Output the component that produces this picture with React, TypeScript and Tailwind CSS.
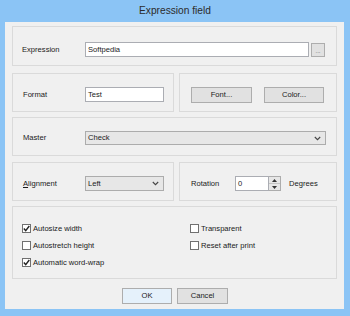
import type { ReactNode } from "react";

const Panel = ({ className = "", children }: { className?: string; children: ReactNode }) => (
  <div className={`border border-[#dadada] ${className}`}>{children}</div>
);

const Chevron = () => (
  <svg width="7" height="5" viewBox="0 0 7 5" className="shrink-0">
    <path d="M0.8 1 L3.5 3.7 L6.2 1" fill="none" stroke="#444" strokeWidth="1.1" />
  </svg>
);

const Check = ({ checked, label }: { checked?: boolean; label: string }) => (
  <div className="flex h-[17px] items-center">
    <span className="flex h-[9px] w-[9px] items-center justify-center border border-[#707070] bg-white">
      {checked && (
        <svg width="7" height="7" viewBox="0 0 7 7">
          <path d="M0.8 3.6 L2.7 5.6 L6.3 1" fill="none" stroke="#222" strokeWidth="1.4" />
        </svg>
      )}
    </span>
    <span className="ml-[2px]">{label}</span>
  </div>
);

const Btn = ({ children, className = "" }: { children: ReactNode; className?: string }) => (
  <div
    className={`flex h-[16px] items-center justify-center border border-[#adadad] bg-[#e1e1e1] ${className}`}
  >
    {children}
  </div>
);

export default function App() {
  return (
    <div className="flex h-[316px] w-[350px] flex-col bg-[#8bc4f5] font-['Liberation_Sans',Arial,sans-serif] text-[7.6px] text-[#1a1a1a]">
      <div className="flex h-[22px] shrink-0 items-center justify-center text-[10.2px] text-[#2b2b2b]">
        Expression field
      </div>

      <div className="ml-[5px] mr-[6px] flex h-[287px] flex-col bg-[#f0f0f0] px-[7px] pt-[4px]">
        <Panel className="h-[40px] pl-[9px] pt-[15px]">
          <div className="flex items-center">
            <span className="w-[63px]">Expression</span>
            <div className="flex h-[15px] w-[224px] items-center border border-[#abadb3] bg-white px-[2px]">
              Softpedia
            </div>
            <div className="ml-[2px] flex h-[14px] w-[14px] items-end justify-center border border-[#adadad] bg-[#e1e1e1] pb-[2px] text-[6px] leading-none text-[#555]">
              ...
            </div>
          </div>
        </Panel>

        <div className="mt-[7px] flex h-[39px] gap-[5px]">
          <Panel className="w-[162px] pl-[10px] pt-[13px]">
            <div className="flex items-center">
              <span className="w-[62px]">Format</span>
              <div className="flex h-[15px] w-[79px] items-center border border-[#abadb3] bg-white px-[2px]">
                Test
              </div>
            </div>
          </Panel>
          <Panel className="flex-1 pl-[11px] pt-[13px]">
            <div className="flex gap-[12px]">
              <Btn className="w-[61px]">Font...</Btn>
              <Btn className="w-[60px]">Color...</Btn>
            </div>
          </Panel>
        </div>

        <Panel className="mt-[5px] h-[39px] pl-[10px] pt-[13px]">
          <div className="flex items-center">
            <span className="w-[62px]">Master</span>
            <div className="flex h-[14px] w-[241px] items-center justify-between border border-[#acacac] bg-[#e7e7e7] pl-[2px] pr-[4px]">
              <span>Check</span>
              <Chevron />
            </div>
          </div>
        </Panel>

        <div className="mt-[6px] flex h-[39px] gap-[5px]">
          <Panel className="w-[162px] pl-[10px] pt-[13px]">
            <div className="flex items-center">
              <span className="w-[62px]">
                <span className="underline">A</span>lignment
              </span>
              <div className="flex h-[15px] w-[79px] items-center justify-between border border-[#acacac] bg-[#e7e7e7] pl-[2px] pr-[4px]">
                <span>Left</span>
                <Chevron />
              </div>
            </div>
          </Panel>
          <Panel className="flex-1 pl-[11px] pt-[13px]">
            <div className="flex items-center">
              <span className="w-[44px]">Rotation</span>
              <div className="flex h-[15px] w-[34px] items-center border border-[#abadb3] bg-white px-[2px]">
                0
              </div>
              <div className="flex h-[15px] w-[12px] flex-col border border-l-0 border-[#acacac] bg-[#e7e7e7]">
                <div className="flex flex-1 items-center justify-center border-b border-[#c4c4c4]">
                  <svg width="5" height="3" viewBox="0 0 5 3">
                    <path d="M0 3 L2.5 0 L5 3 Z" fill="#333" />
                  </svg>
                </div>
                <div className="flex flex-1 items-center justify-center">
                  <svg width="5" height="3" viewBox="0 0 5 3">
                    <path d="M0 0 L2.5 3 L5 0 Z" fill="#333" />
                  </svg>
                </div>
              </div>
              <span className="ml-[8px]">Degrees</span>
            </div>
          </Panel>
        </div>

        <Panel className="mt-[5px] h-[73px] pl-[9px] pt-[13px]">
          <div className="flex">
            <div className="w-[168px]">
              <Check checked label="Autosize width" />
              <Check label="Autostretch height" />
              <Check checked label="Automatic word-wrap" />
            </div>
            <div>
              <Check label="Transparent" />
              <Check label="Reset after print" />
            </div>
          </div>
        </Panel>

        <div className="mt-[9px] flex justify-center gap-[5px] pl-[1px]">
          <Btn className="w-[50px] border-[#6fa8dc] bg-[#e5f1fb]">OK</Btn>
          <Btn className="w-[51px]">Cancel</Btn>
        </div>
      </div>
    </div>
  );
}
